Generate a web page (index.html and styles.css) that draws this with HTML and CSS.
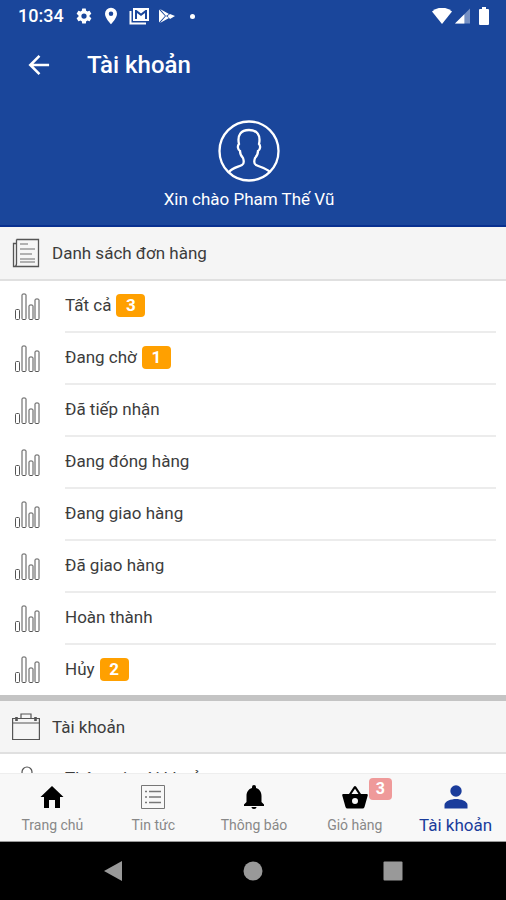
FILE: index.html
```html
<!DOCTYPE html>
<html lang="vi">
<head>
<meta charset="utf-8">
<meta name="viewport" content="width=device-width, initial-scale=1">
<title>Tài khoản</title>
<link rel="stylesheet" href="styles.css">
</head>
<body>
<svg class="sprite" aria-hidden="true">
  <symbol id="bars" viewBox="0 0 28 28">
    <g fill="none" stroke="currentColor" stroke-width="1">
      <rect x="2.500" y="17.500" width="4" height="10" rx="1"/>
      <rect x="9" y="2" width="4" height="25.500" rx="1"/>
      <rect x="16" y="13" width="4" height="14.500" rx="1"/>
      <rect x="22" y="7" width="4" height="20.500" rx="1"/>
    </g>
  </symbol>
</svg>
<div class="app">
  <header class="top">
    <div class="status">
      <span class="clock">10:34</span>
      <svg class="s-icon" viewBox="0 0 24 24"><path fill="currentColor" fill-rule="evenodd" d="M19.4 13a7.500 7.500 0 0 0 0-2l2.100-1.700a.5.5 0 0 0 .1-.6l-2-3.500a.5.5 0 0 0-.6-.2l-2.500 1a7.300 7.300 0 0 0-1.700-1l-.4-2.600A.5.5 0 0 0 14 2h-4a.5.5 0 0 0-.5.4L9.100 5a7.700 7.700 0 0 0-1.700 1l-2.500-1a.5.5 0 0 0-.6.2l-2 3.500a.5.5 0 0 0 .1.600L4.600 11a8 8 0 0 0 0 2l-2.200 1.700a.5.5 0 0 0-.1.600l2 3.500c.1.200.4.300.6.200l2.500-1a7.300 7.300 0 0 0 1.700 1l.4 2.600c0 .2.200.4.500.4h4c.3 0 .5-.2.500-.4l.4-2.600a7.700 7.700 0 0 0 1.700-1l2.500 1c.2.100.5 0 .6-.2l2-3.500a.5.5 0 0 0-.1-.6zM12 8.500a3.500 3.500 0 1 1 0 7 3.500 3.500 0 0 1 0-7z"/></svg>
      <svg class="s-icon" viewBox="0 0 24 24"><path fill="currentColor" fill-rule="evenodd" d="M12 1a8 8 0 0 0-8 8c0 6 8 14 8 14s8-8 8-14a8 8 0 0 0-8-8zm0 5a3 3 0 1 1 0 6 3 3 0 0 1 0-6z"/></svg>
      <svg class="s-icon s-wide" viewBox="0 0 20 18"><path fill="none" stroke="currentColor" stroke-width="2" d="M1.500 4v12.500H17"/><path fill="currentColor" fill-rule="evenodd" d="M4 1h16v13H4zM6 3v9h2V6l4 3 4-3v6h2V3h-1.500L12 6.500 7.500 3z"/></svg>
      <svg class="s-play" viewBox="0 0 18 18"><path fill="currentColor" d="M2 2l9 5-3 2zM2 16l9-5-3-2zM1 2.500L7 9l-6 6.500zM12 7L17 9l-5 3L9.500 9z"/></svg>
      <span class="dot"></span>
      <span class="signals">
        <svg class="wifi" viewBox="0 0 20 16"><path fill="currentColor" d="M0 3.500a15 15 0 0 1 20 0L10 16z"/></svg>
        <svg class="cell" viewBox="0 0 16 16"><path fill="currentColor" opacity=".4" d="M16 0v16H0z"/><path fill="currentColor" d="M10 6v10H0z"/></svg>
        <svg class="battery" viewBox="0 0 12 18"><path fill="currentColor" d="M4 0h4v2h2q1 0 1 1v14q0 1-1 1H2q-1 0-1-1V3q0-1 1-1h2z"/></svg>
      </span>
    </div>
    <div class="titlebar">
      <button class="back" type="button" aria-label="Quay lại">
        <svg viewBox="0 0 24 24"><path fill="none" stroke="currentColor" stroke-width="2.800" d="M23 12H3M12.500 2L2.500 12l10 10"/></svg>
      </button>
      <h1>Tài khoản</h1>
    </div>
    <div class="profile">
      <svg class="avatar" viewBox="0 0 62 62"><g fill="none" stroke="currentColor" stroke-width="2.300"><circle cx="31" cy="31" r="29.500"/><path d="M11 52c3-4 9-5 13-7 2-1 2-4 1-7-2-2-3-4-3-7-2-1-3-5-1-7-2-9 2-14 10-14s12 5 10 14c2 2 1 6-1 7 0 3-1 5-3 7-1 3-1 6 1 7 4 2 10 3 14 7"/></g></svg>
      <p>Xin chào Pham Thế Vũ</p>
    </div>
  </header>

  <main class="content">
    <h2 class="section">
      <svg viewBox="0 0 28 30"><g fill="none" stroke="currentColor" stroke-width="1.300"><path d="M4.500 1.500h22v27h-25v-23h3M4.500 1.500v24q0 3-2 3"/><path stroke="#999" d="M8 6h8M8 11h15M8 16h12M8 21h15M8 24h15"/></g></svg>
      Danh sách đơn hàng
    </h2>
    <ul class="list">
      <li><svg class="bars"><use href="#bars"/></svg><a href="#all">Tất cả <b class="badge">3</b></a></li>
      <li><svg class="bars"><use href="#bars"/></svg><a href="#waiting">Đang chờ <b class="badge">1</b></a></li>
      <li><svg class="bars"><use href="#bars"/></svg><a href="#received">Đã tiếp nhận</a></li>
      <li><svg class="bars"><use href="#bars"/></svg><a href="#packing">Đang đóng hàng</a></li>
      <li><svg class="bars"><use href="#bars"/></svg><a href="#shipping">Đang giao hàng</a></li>
      <li><svg class="bars"><use href="#bars"/></svg><a href="#shipped">Đã giao hàng</a></li>
      <li><svg class="bars"><use href="#bars"/></svg><a href="#done">Hoàn thành</a></li>
      <li><svg class="bars"><use href="#bars"/></svg><a href="#cancelled">Hủy <b class="badge">2</b></a></li>
    </ul>
    <h2 class="section divided">
      <svg viewBox="0 0 28 30"><g fill="none" stroke="currentColor" stroke-width="1.200"><path d="M.6 6.500h26.800v21H.6zM.6 11h26.800M9 6V2h10v4"/><path stroke-width="2.600" d="M4.500 5v4M23.500 5v4"/></g></svg>
      Tài khoản
    </h2>
    <ul class="list">
      <li><svg class="bars" viewBox="0 0 28 28"><g fill="none" stroke="currentColor" stroke-width="1.200"><circle cx="14" cy="8" r="5"/><path d="M4 27c0-14 20-14 20 0z"/></g></svg><a href="#info">Thông tin tài khoản</a></li>
    </ul>
  </main>

  <nav class="tabs">
    <a href="#home"><svg viewBox="0 0 24 24"><path fill="currentColor" d="M12 1L.5 12H4v11h5v-8h6v8h5V12h3.500z"/></svg>Trang chủ</a>
    <a href="#news"><svg viewBox="0 0 24 24"><g fill="none" stroke="#777"><path d="M.5.5h23v23H.5z"/><path stroke-width="1.400" d="M8 6.500h12M8 12h12M8 17.500h12M4 6.500h2M4 12h2M4 17.500h2"/></g></svg>Tin tức</a>
    <a href="#alerts"><svg viewBox="0 0 24 24"><path fill="currentColor" d="M12 24c1.500 0 2.500-.8 2.500-2h-5c0 1.200 1 2 2.500 2zM19.500 17v-6c0-4-2-7-5.500-8V2a2 2 0 0 0-4 0v1c-3.500 1-5.500 4-5.500 8v6L2 19.500V21h20v-1.500z"/></svg>Thông báo</a>
    <a href="#cart"><span class="cart"><svg viewBox="0 0 26 24"><path fill="currentColor" fill-rule="evenodd" d="M19 9l-4.800-7.300q-1.200-1.400-2.400 0L7 9H1q-1 .2-.8 1.300L3.500 22q.5 1.500 2 1.500h15q1.500 0 2-1.500l3.300-11.700Q26 9.200 25 9zM9.500 9L13 3.700 16.500 9zM13 13a3 3 0 1 1 0 6 3 3 0 0 1 0-6z"/></svg><b class="count">3</b></span>Giỏ hàng</a>
    <a href="#account" class="active" aria-current="page"><svg viewBox="0 0 24 24"><circle cx="12" cy="6" r="5.700" fill="currentColor"/><path fill="currentColor" d="M.5 23.500V20c0-4 7-6 11.500-6s11.500 2 11.500 6v3.500z"/></svg>Tài khoản</a>
  </nav>

  <footer class="system">
    <button type="button" aria-label="Trở về"><svg viewBox="0 0 20 20"><path fill="currentColor" d="M19 0v20L1 10z"/></svg></button>
    <button type="button" aria-label="Màn hình chính"><svg viewBox="0 0 20 20"><circle cx="10" cy="10" r="9.500" fill="currentColor"/></svg></button>
    <button type="button" aria-label="Gần đây"><svg viewBox="0 0 20 20"><rect x=".5" y=".5" width="19" height="19" rx="1" fill="currentColor"/></svg></button>
  </footer>
</div>
</body>
</html>
```
FILE: styles.css
```css
* { box-sizing: border-box; margin: 0; padding: 0; }
body { font-family: Roboto, "Noto Sans", sans-serif; font-size: 17px; line-height: 24px; color: #3c3c3c; background: #fff; }
a { color: inherit; text-decoration: none; }
button { border: 0; background: none; color: inherit; }
svg { display: block; flex: none; }
.sprite { position: absolute; width: 0; height: 0; }

.app { display: flex; flex-direction: column; height: 100vh; overflow: hidden; }

.top { flex: none; background: #1a469b; color: #fff; border-bottom: 2px solid #083090; }
.status { display: flex; align-items: center; height: 32px; padding: 0 16px 0 18px; }
.clock { font-size: 18px; font-weight: 500; margin-right: 11px; }
.s-icon { width: 18px; height: 18px; margin-right: 9px; }
.s-wide { width: 20px; }
.s-play { width: 18px; height: 18px; }
.dot { width: 5px; height: 5px; margin-left: 14px; border-radius: 50%; background: #fff; }
.signals { display: flex; align-items: center; margin-left: auto; }
.wifi { width: 20px; height: 16px; margin-right: 3px; }
.cell { width: 15px; height: 16px; margin-right: 8px; }
.battery { width: 12px; height: 18px; }
.titlebar { display: flex; align-items: center; height: 66px; padding: 0 26px; gap: 35px; }
.back svg { width: 26px; height: 22px; }
h1 { font-size: 24px; line-height: 32px; font-weight: 500; }
.profile { display: flex; flex-direction: column; align-items: center; padding: 22px 8px 14px 0; gap: 5px; }
.avatar { width: 62px; height: 62px; }
.profile p { font-size: 17px; }

.content { flex: 1; min-height: 0; overflow: hidden; }
.section { display: flex; align-items: center; gap: 12px; height: 54px; padding: 0 12px; background: #f5f5f5; border-bottom: 2px solid #e0e0e0; font-size: 17px; font-weight: 400; }
.section svg { width: 28px; height: 30px; color: #555; }
.divided { height: 59px; border-top: 6px solid #c4c4c4; }
.list { list-style: none; }
.list li { display: flex; align-items: center; padding: 0 10px 0 13px; gap: 24px; }
.bars { width: 28px; height: 28px; margin-bottom: 2px; color: #555; }
.list a { flex: 1; display: flex; align-items: center; gap: 5px; height: 52px; padding-bottom: 2px; border-bottom: 2px solid #ececec; }
.list li:last-child a { height: 50px; border-bottom: 0; }
.badge { width: 29px; border-radius: 4px; background: #ffa000; color: #fff; text-align: center; font-size: 17px; line-height: 23px; }

.tabs { flex: none; display: grid; grid-template-columns: repeat(5, 1fr); height: 69px; padding: 11px 0 0 2px; border-top: 1px solid #eee; border-bottom: 1px solid #999; background: #f8f8f8; color: #000; }
.tabs > a { display: flex; flex-direction: column; align-items: center; gap: 4px; font-size: 14px; color: #888; white-space: nowrap; }
.tabs svg { width: 24px; height: 24px; color: #000; }
.tabs .cart { position: relative; }
.tabs .cart svg { width: 26px; }
.count { position: absolute; left: 27px; top: -7px; width: 23px; border-radius: 4px; background: #ef9a9a; color: #fff; font-size: 16px; line-height: 22px; text-align: center; }
.tabs > .active, .tabs .active svg { color: #1a3c9b; }
.tabs > .active { font-size: 17px; }

.system { flex: none; display: flex; justify-content: center; align-items: center; gap: 120px; height: 58px; background: #000; color: #999; }
.system svg { width: 20px; height: 20px; }
```
